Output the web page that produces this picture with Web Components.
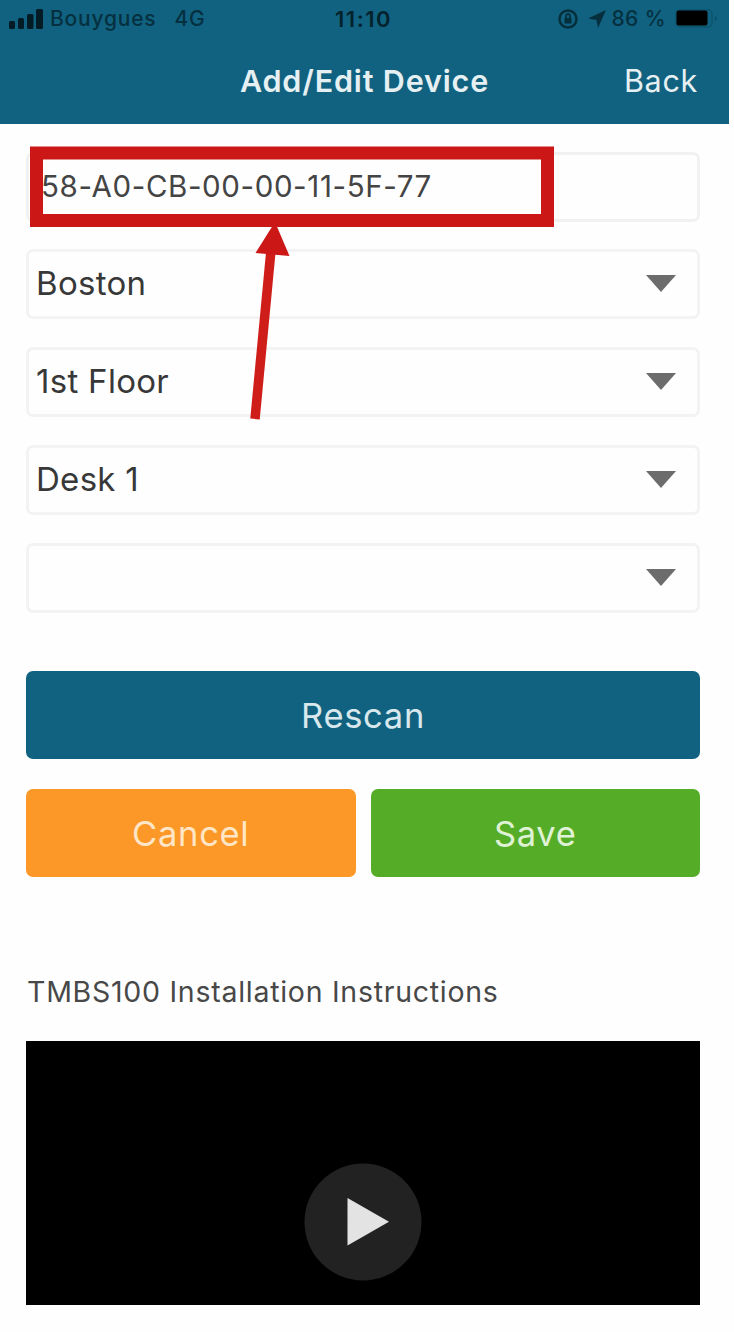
<!DOCTYPE html>
<html lang="en">
<head>
<meta charset="utf-8">
<title>Add/Edit Device</title>
<style>
html,body{margin:0;background:#fefefe;font-family:Inter,"Liberation Sans",sans-serif;width:734px;height:1332px;overflow:hidden}
</style>
</head>
<body>
<device-page></device-page>
<script>
const define = (name, html) => customElements.define(name, class extends HTMLElement {
  constructor() {
    super();
    this.attachShadow({ mode: 'open' }).innerHTML = html;
  }
});

define('status-bar', `
<style>
:host{display:grid;grid-template-columns:1fr auto 1fr;align-items:center;height:38px;padding:0 11px 0 9px;font-size:21px;line-height:38px;color:#05303f;white-space:pre}
.l,.r{display:flex;align-items:center}
.r{justify-content:flex-end}
.t{font-weight:600;font-size:22px;color:#03222d;letter-spacing:1.5px}
.c{margin-left:6px;font-weight:500;letter-spacing:.8px}
.n{margin-left:18px;font-weight:500;letter-spacing:.7px}
.p{margin:0 9px 0 5px;font-weight:500;letter-spacing:.4px}
svg{display:block;flex:none}
</style>
<div class="l">
<svg width="35" height="20" viewBox="0 0 35 20" fill="#021b24"><rect y="12" width="6" height="8" rx="1.5"/><rect x="9" y="9" width="6" height="11" rx="1.5"/><rect x="18" y="5" width="6.500" height="15" rx="1.500"/><rect x="27" y="0" width="7" height="20" rx="1.500"/></svg>
<span class="c">Bouygues</span><span class="n">4G</span></div>
<span class="t">11:10</span>
<div class="r">
<svg width="22" height="22" viewBox="0 0 22 22" fill="none" stroke="#052f3d" stroke-width="2.500"><circle cx="11" cy="11" r="8.500"/><rect x="7.500" y="10" width="7" height="5.500" fill="#052f3d" stroke="none"/><path d="M9 10V8a2 2 0 0 1 4 0v2" stroke-width="1.800"/></svg>
<svg style="margin-left:8px" width="20" height="22" viewBox="0 0 20 22" fill="#052f3d"><path d="M19 2 1 10.500l8.500 1.500L11 20z"/></svg>
<span class="p">86 %</span>
<svg width="43" height="20" viewBox="0 0 43 20"><rect x="1" y="1" width="36" height="17" rx="4" fill="none" stroke="#0b566f" stroke-width="1.500"/><rect x="1.500" y="1.500" width="31" height="15" rx="2" fill="#000"/><path d="M40 6.500q3 3 0 6" fill="#0a4e64"/></svg>
</div>`);

define('nav-bar', `
<style>
:host{display:grid;grid-template-columns:1fr auto 1fr;align-items:center;height:86px;padding:0 31px;color:#e6f0f3;font-size:30.500px;line-height:86px}
.title{font-weight:600;letter-spacing:.85px}
.back{text-align:right;letter-spacing:.7px}
</style><span></span><span class="title"><slot></slot></span><span class="back"><slot name="action"></slot></span>`);

define('text-field', `
<style>
:host{display:flex;align-items:center;box-sizing:border-box;height:70px;padding:0 12px 2px;border:3px solid #f1f1f1;border-radius:7px;background:#fefefe;font-size:29.500px;letter-spacing:.6px;color:#444;white-space:pre}
</style><slot></slot>`);

define('select-field', `
<style>
:host{display:flex;align-items:center;justify-content:space-between;box-sizing:border-box;height:70px;padding:0 21px 2px 7px;border:3px solid #f3f3f3;border-radius:7px;background:#fefefe;font-size:33px;letter-spacing:.3px;color:#383838}
svg{display:block}
</style><span><slot></slot></span><svg width="30" height="17" viewBox="0 0 30 17"><path d="M0 0h30L15 17z" fill="#6c6c6c"/></svg>`);

define('action-button', `
<style>
:host{display:flex;align-items:center;justify-content:center;height:88px;border-radius:7px;background:var(--fill);color:var(--ink);font-size:34.500px;letter-spacing:.7px}
</style><span><slot></slot></span>`);

define('video-player', `
<style>
:host{display:flex;justify-content:center;box-sizing:border-box;height:264px;padding-top:122px;background:#000}
svg{display:block}
</style><svg width="118" height="118" viewBox="0 0 118 118"><circle cx="59" cy="59" r="58.500" fill="#222"/><path d="M43.500 35v47.500L85 58.800z" fill="#e3e3e3"/></svg>`);

define('callout-mark', `
<style>
:host{display:block;position:absolute;left:30px;top:146px;width:524px;height:276px;pointer-events:none}
svg{display:block}
</style><svg width="524" height="276" viewBox="0 0 524 276"><rect x="6.500" y="7" width="511" height="67.500" fill="none" stroke="#cc1717" stroke-width="13"/><path d="M225 273 241 104" stroke="#cf1d1a" stroke-width="9.500"/><path d="M245 76 225.500 107 259.500 110z" fill="#cc1717"/></svg>`);

define('device-page', `
<style>
:host{display:block;position:relative;width:734px;height:1332px;background:#fefefe}
header{width:729px;height:124px;background:#116280}
main{display:flex;flex-direction:column;width:674px;padding:28px 0 0 26px}
.fields{display:grid;gap:28px}
text-field{margin-bottom:-1px}
.actions{display:grid;grid-template-columns:1fr 1fr;gap:30px 15px;margin-top:58px}
.wide{grid-column:1/3}
h2{margin:95px 0 29px 1px;font-size:28.500px;font-weight:400;letter-spacing:.73px;line-height:40px;color:#484848;white-space:nowrap}
</style>
<header><status-bar></status-bar><nav-bar>Add/Edit Device<span slot="action">Back</span></nav-bar></header>
<main>
<div class="fields">
<text-field>58-A0-CB-00-00-11-5F-77</text-field>
<select-field>Boston</select-field>
<select-field>1st Floor</select-field>
<select-field>Desk 1</select-field>
<select-field></select-field>
</div>
<div class="actions">
<action-button class="wide" style="--fill:#116280;--ink:#d9e8ed">Rescan</action-button>
<action-button style="--fill:#fc9828;--ink:#ffe6c6">Cancel</action-button>
<action-button style="--fill:#55ad27;--ink:#e0f2d6">Save</action-button>
</div>
<h2>TMBS100 Installation Instructions</h2>
<video-player></video-player>
</main>
<callout-mark></callout-mark>`);
</script>
</body>
</html>
